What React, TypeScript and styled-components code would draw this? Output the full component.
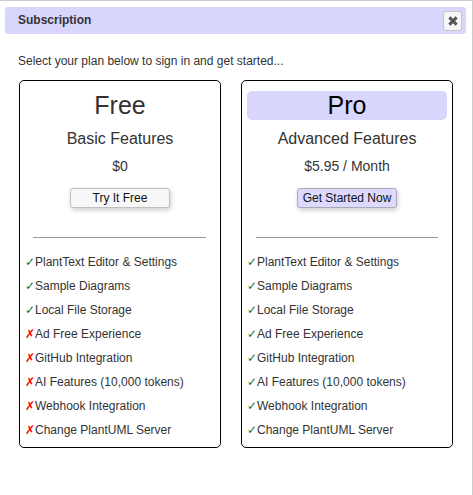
import React from "react";
import styled, { createGlobalStyle } from "styled-components";

const Global = createGlobalStyle`
  html, body { margin: 0; padding: 0; background: #fff; }
  * { box-sizing: border-box; }
`;

const Dialog = styled.div`
  width: 473px;
  height: 495px;
  overflow: hidden;
  background: #fff;
  border-top: 1px solid #ccc;
  border-right: 1px solid #ccc;
  padding: 6px 6px 0 5px;
  font-family: "Liberation Sans", Arial, sans-serif;
  color: #333;
`;

const TitleBar = styled.div`
  height: 27px;
  background: #d9d6fe;
  border-radius: 3px;
  padding: 0 4px 0 13px;
  display: flex;
  align-items: center;
  justify-content: space-between;
`;

const Title = styled.span`
  font-size: 12px;
  font-weight: 700;
  color: #333;
  margin-top: -1px;
`;

const CloseButton = styled.button`
  width: 19px;
  height: 20px;
  padding: 0;
  border: 1px solid #c5c5c5;
  border-radius: 3px;
  background: #f6f6f6;
  display: flex;
  align-items: center;
  justify-content: center;
`;

const Intro = styled.p`
  margin: 20px 0 0 13px;
  font-size: 12px;
  line-height: 14px;
  color: #333;
`;

const Plans = styled.div`
  display: flex;
  gap: 20px;
  margin: 12px 0 0 14px;
`;

const Card = styled.section<{ $wide?: boolean }>`
  width: ${(p) => (p.$wide ? 212 : 202)}px;
  height: 368px;
  border: 1px solid #000;
  border-radius: 5px;
  padding: 10px 5px 0;
  display: flex;
  flex-direction: column;
  align-items: center;
`;

const PlanName = styled.h2<{ $highlight?: boolean }>`
  margin: 0;
  width: 100%;
  height: 29px;
  border-radius: 5px;
  background: ${(p) => (p.$highlight ? "#d9d6fe" : "transparent")};
  color: ${(p) => (p.$highlight ? "#000" : "#333")};
  font-size: 25px;
  font-weight: 400;
  line-height: 29px;
  text-align: center;
`;

const Tagline = styled.div`
  margin-top: 9px;
  font-size: 16px;
  line-height: 19px;
`;

const Price = styled.div`
  margin-top: 10px;
  font-size: 14px;
  line-height: 16px;
`;

const CTA = styled.button<{ $primary?: boolean }>`
  margin-top: 14px;
  width: 100px;
  height: 20px;
  padding: 0;
  border: 1px solid ${(p) => (p.$primary ? "#a9a9b8" : "#c0c0c0")};
  border-radius: 3px;
  background: ${(p) => (p.$primary ? "#dddaff" : "#f8f8f8")};
  color: #111;
  font-family: inherit;
  font-size: 12px;
  line-height: 18px;
  box-shadow: 1px 2px 5px rgba(0, 0, 0, 0.2);
`;

const Divider = styled.hr<{ $wide?: boolean }>`
  margin: 29px 0 0 ${(p) => (p.$wide ? 0 : -2)}px;
  width: ${(p) => (p.$wide ? 182 : 173)}px;
  height: 1px;
  border: 0;
  background: #999;
  flex: none;
`;

const Features = styled.ul`
  list-style: none;
  margin: 12px 0 0;
  padding: 0;
  width: 100%;
`;

const Feature = styled.li`
  height: 24px;
  font-size: 12px;
  line-height: 24px;
  color: #333;
  white-space: nowrap;
`;

const Mark = styled.span<{ $ok: boolean }>`
  display: inline-block;
  width: 10px;
  color: ${(p) => (p.$ok ? "#1f7a1f" : "#f00")};
  font-size: 12px;
`;

const names = [
  "PlantText Editor & Settings",
  "Sample Diagrams",
  "Local File Storage",
  "Ad Free Experience",
  "GitHub Integration",
  "AI Features (10,000 tokens)",
  "Webhook Integration",
  "Change PlantUML Server",
];

const FeatureList = ({ included }: { included: number }) => (
  <Features>
    {names.map((n, i) => (
      <Feature key={n}>
        <Mark $ok={i < included}>{i < included ? "✓" : "✗"}</Mark>
        {n}
      </Feature>
    ))}
  </Features>
);

export default function App() {
  return (
    <>
      <Global />
      <Dialog>
        <TitleBar>
          <Title>Subscription</Title>
          <CloseButton aria-label="Close">
            <svg width="10" height="10" viewBox="0 0 10 10">
              <path d="M1.4 1.4L8.6 8.6M8.6 1.4L1.4 8.6" stroke="#555" strokeWidth="3" />
            </svg>
          </CloseButton>
        </TitleBar>
        <Intro>Select your plan below to sign in and get started...</Intro>
        <Plans>
          <Card>
            <PlanName>Free</PlanName>
            <Tagline>Basic Features</Tagline>
            <Price>$0</Price>
            <CTA>Try It Free</CTA>
            <Divider />
            <FeatureList included={3} />
          </Card>
          <Card $wide>
            <PlanName $highlight>Pro</PlanName>
            <Tagline>Advanced Features</Tagline>
            <Price>$5.95 / Month</Price>
            <CTA $primary>Get Started Now</CTA>
            <Divider $wide />
            <FeatureList included={8} />
          </Card>
        </Plans>
      </Dialog>
    </>
  );
}
